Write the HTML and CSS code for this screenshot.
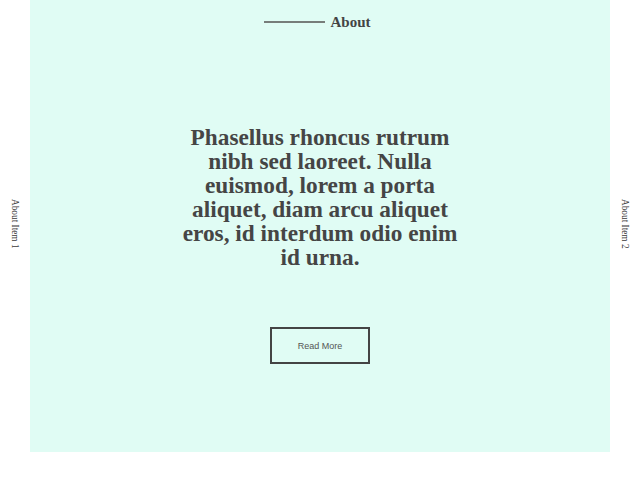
FILE: index.html
```html
<!DOCTYPE html>
<html>
<head>
<meta charset="utf-8">
<link rel="stylesheet" href="styles.css">
</head>
<body>
<div class="page">
  <aside class="side"><span class="side-label">About Item 1</span></aside>
  <main class="panel">
    <header class="top">
      <span class="rule"></span>
      <span class="title">About</span>
    </header>
    <h1 class="headline">Phasellus rhoncus rutrum nibh sed laoreet. Nulla euismod, lorem a porta aliquet, diam arcu aliquet eros, id interdum odio enim id urna.</h1>
    <a class="btn" href="#">Read More</a>
  </main>
  <aside class="side"><span class="side-label">About Item 2</span></aside>
</div>
</body>
</html>
```
FILE: styles.css
```css
html, body {
  margin: 0;
  padding: 0;
  background: #ffffff;
}
.page {
  display: flex;
  width: 640px;
  height: 452px;
}
.side {
  width: 30px;
  display: flex;
  align-items: center;
  justify-content: center;
}
.side-label {
  writing-mode: vertical-rl;
  font-family: "Liberation Serif", serif;
  font-size: 9.3px;
  color: #3a3a3a;
  margin-bottom: 4px;
}
.panel {
  width: 580px;
  background: #e0fcf4;
  display: flex;
  flex-direction: column;
  align-items: center;
}
.top {
  display: flex;
  align-items: center;
  gap: 5px;
  height: 42px;
  padding-top: 1px;
  padding-right: 5px;
}
.rule {
  width: 61px;
  height: 2px;
  background: #777d7a;
}
.title {
  font-family: "Liberation Serif", serif;
  font-weight: bold;
  font-size: 15px;
  color: #444;
}
.headline {
  margin: 82px 0 0;
  width: 290px;
  text-align: center;
  font-family: "Liberation Serif", serif;
  font-weight: bold;
  font-size: 23.3px;
  line-height: 24px;
  color: #454545;
}
.btn {
  margin-top: 58px;
  width: 96px;
  height: 33px;
  border: 2px solid #444;
  display: flex;
  align-items: center;
  justify-content: center;
  font-family: "Liberation Sans", sans-serif;
  font-size: 9px;
  color: #555;
  text-decoration: none;
}
```
